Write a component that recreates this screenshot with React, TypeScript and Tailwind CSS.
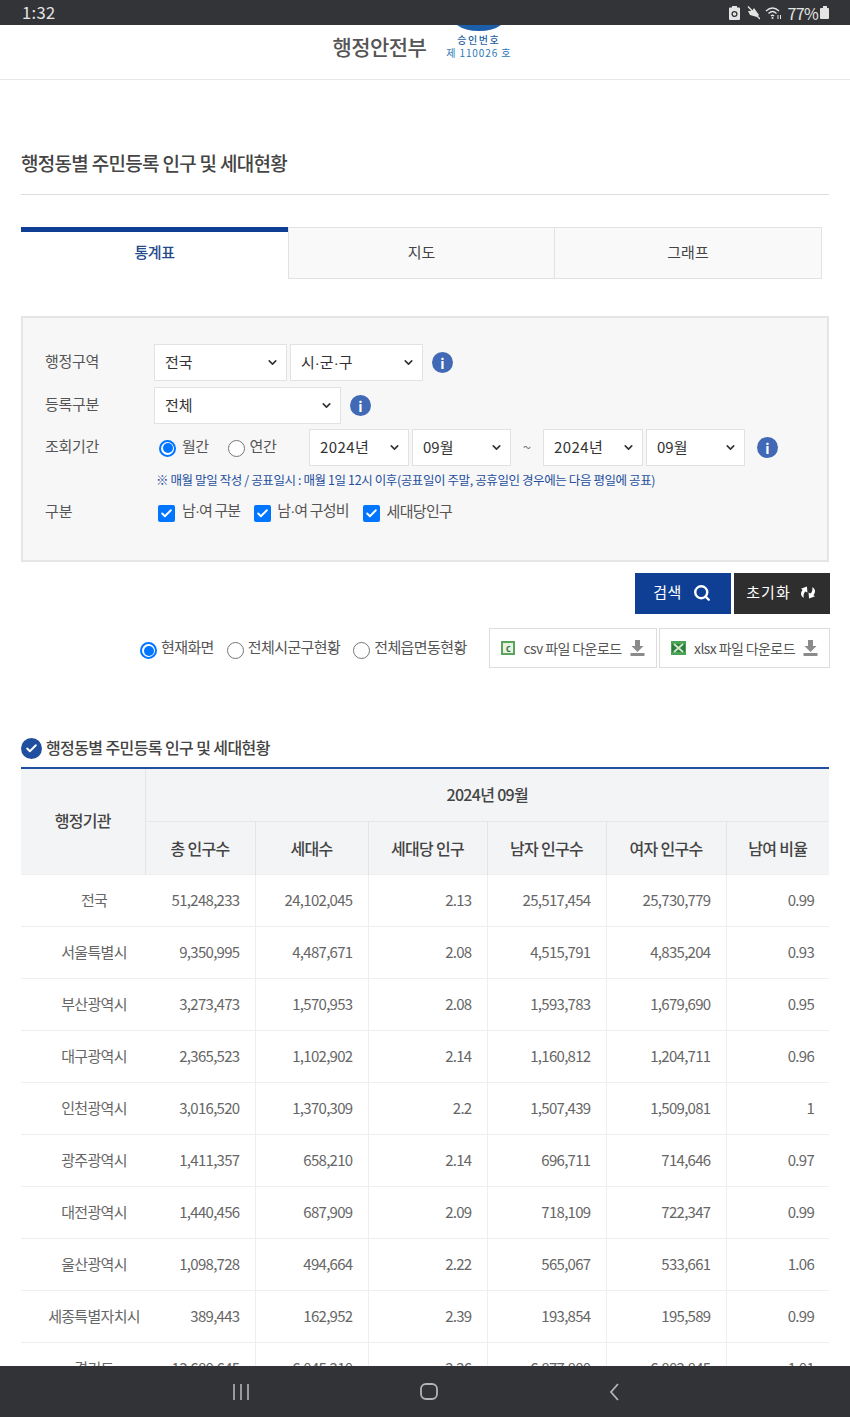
import { Search, Check, ChevronDown } from "lucide-react";
import type { ReactNode } from "react";

const rows = [
  ["전국", "51,248,233", "24,102,045", "2.13", "25,517,454", "25,730,779", "0.99"],
  ["서울특별시", "9,350,995", "4,487,671", "2.08", "4,515,791", "4,835,204", "0.93"],
  ["부산광역시", "3,273,473", "1,570,953", "2.08", "1,593,783", "1,679,690", "0.95"],
  ["대구광역시", "2,365,523", "1,102,902", "2.14", "1,160,812", "1,204,711", "0.96"],
  ["인천광역시", "3,016,520", "1,370,309", "2.2", "1,507,439", "1,509,081", "1"],
  ["광주광역시", "1,411,357", "658,210", "2.14", "696,711", "714,646", "0.97"],
  ["대전광역시", "1,440,456", "687,909", "2.09", "718,109", "722,347", "0.99"],
  ["울산광역시", "1,098,728", "494,664", "2.22", "565,067", "533,661", "1.06"],
  ["세종특별자치시", "389,443", "162,952", "2.39", "193,854", "195,589", "0.99"],
  ["경기도", "13,680,645", "6,045,210", "2.26", "6,877,800", "6,802,845", "1.01"],
];

const heads = ["총 인구수", "세대수", "세대당 인구", "남자 인구수", "여자 인구수", "남여 비율"];

function Dot() {
  return <span className="font-['Liberation_Sans']">·</span>;
}

function Select({ label, w }: { label: ReactNode; w: string }) {
  return (
    <div className={`flex h-[37px] items-center justify-between border border-[#e2e2e2] bg-white pl-[10px] pr-[7px] text-[15px] text-[#333] ${w}`}>
      <span>{label}</span>
      <ChevronDown size={13} strokeWidth={3} className="text-[#333]" />
    </div>
  );
}

function InfoDot() {
  return (
    <span className="flex h-[21px] w-[21px] items-center justify-center rounded-full bg-[#4169b5] text-[14px] font-bold leading-none text-white">
      i
    </span>
  );
}

function Radio({ on }: { on?: boolean }) {
  return on ? (
    <span className="flex h-[17px] w-[17px] shrink-0 items-center justify-center rounded-full border-2 border-[#0075ff] bg-white">
      <span className="h-[10px] w-[10px] rounded-full bg-[#0075ff]" />
    </span>
  ) : (
    <span className="block h-[17px] w-[17px] shrink-0 rounded-full border border-[#767676] bg-white" />
  );
}

function Box() {
  return (
    <span className="flex h-[17px] w-[17px] shrink-0 items-center justify-center rounded-[2px] bg-[#0075ff]">
      <Check size={13} strokeWidth={3.5} className="text-white" />
    </span>
  );
}

function ExcelIcon({ kind }: { kind: "csv" | "xlsx" }) {
  return kind === "csv" ? (
    <span className="flex h-[14px] w-[14px] items-center justify-center border-2 border-[#5ba55b] bg-[#e7f2e3] text-[9px] font-bold leading-none text-[#2e6f35]">
      c
    </span>
  ) : (
    <svg width="15" height="14" viewBox="0 0 15 14">
      <rect width="15" height="14" fill="#4aa354" />
      <rect x="1" y="3" width="13" height="8" fill="#2f7f3c" />
      <path d="M3 3 L12 11 M12 3 L3 11" stroke="#cfe6cc" strokeWidth="1.8" />
    </svg>
  );
}

function SaveIcon() {
  return (
    <svg width="15" height="16" viewBox="0 0 15 16" fill="#8b8b8b">
      <path d="M5 0 H10 V6 H13.5 L7.5 12 L1.5 6 H5 Z" />
      <rect x="0.5" y="13" width="14" height="3" />
    </svg>
  );
}

function FileButton({ kind, w }: { kind: "csv" | "xlsx"; w: string }) {
  return (
    <div className={`flex h-[40px] items-center justify-between border border-[#ddd] bg-white px-[11px] text-[14px] tracking-[-0.6px] text-[#555] ${w}`}>
      <ExcelIcon kind={kind} />
      <span>{kind} 파일 다운로드</span>
      <SaveIcon />
    </div>
  );
}

export default function App() {
  return (
    <div className="flex h-[1417px] w-[850px] flex-col overflow-hidden bg-white font-['Noto_Sans_CJK_KR','Noto_Sans',sans-serif]">
      <div className="flex h-[25px] shrink-0 items-center justify-between bg-[#333438] pl-[22px] pr-[21px] text-[#e4e4e4]">
        <span className="text-[16.5px] tracking-[0.4px]">1:32</span>
        <div className="flex items-center text-[16px]">
          <svg width="11" height="14" viewBox="0 0 11 14" fill="#e4e4e4" className="mr-[7px]">
            <path d="M3 0 H8 V1.5 H10 Q11 1.5 11 2.5 V13 Q11 14 10 14 H1 Q0 14 0 13 V2.5 Q0 1.5 1 1.5 H3 Z" />
            <circle cx="5.5" cy="8" r="2.4" fill="none" stroke="#333438" strokeWidth="1.3" />
          </svg>
          <svg width="13" height="14" viewBox="0 0 13 14" fill="#e4e4e4" className="mr-[5px]">
            <path d="M1 5 L5 5 L7 2 L12 9 L10 11 L3 9 Z" />
            <path d="M1 0.5 L13 13" stroke="#e4e4e4" strokeWidth="1.4" />
          </svg>
          <svg width="17" height="14" viewBox="0 0 17 14" fill="none" stroke="#e4e4e4" strokeWidth="1.3" className="mr-[6px]">
            <path d="M1 5 Q7.5 -1 14 5" />
            <path d="M3.5 7.5 Q7.5 3.5 11.5 7.5" />
            <path d="M6 10 Q7.5 8.5 9 10" />
            <circle cx="7.5" cy="12" r="1" fill="#e4e4e4" stroke="none" />
            <path d="M13 9 V13 M15.5 9 V13" strokeWidth="1" />
          </svg>
          <span className="tracking-[-0.7px]">77%</span>
          <span className="ml-[2px] flex flex-col items-center">
            <span className="h-[2px] w-[4px] bg-[#e4e4e4]" />
            <span className="h-[11px] w-[9px] rounded-[1px] bg-[#e4e4e4]" />
          </span>
        </div>
      </div>

      <div className="min-h-0 flex-1 overflow-hidden">
        <header className="flex h-[55px] justify-center border-b border-[#e6e6e6] pr-[6px]">
          <span className="mt-[6px] text-[21px] font-medium tracking-[-0.6px] text-[#555]">행정안전부</span>
          <div className="ml-[20px] flex flex-col items-center">
            <svg width="44" height="6" viewBox="0 0 44 6" className="block">
              <path d="M0 0 H44 Q36 6 22 6 Q8 6 0 0 Z" fill="#1c5ea8" />
            </svg>
            <span className="mt-[2px] text-[10px] font-medium leading-[13px] tracking-[1.6px] text-[#1d5f9f]">승인번호</span>
            <span className="text-[10px] leading-[13px] tracking-[0.9px] text-[#2a78b8]">제 110026 호</span>
          </div>
        </header>

        <div className="px-[21px]">
          <h1 className="mt-[68px] border-b border-[#ddd] pb-[17px] text-[19px] font-medium leading-[29px] tracking-[-0.7px] text-[#444]">
            행정동별 주민등록 인구 및 세대현황
          </h1>

          <div className="mt-[32px] flex h-[52px] w-[801px] text-[15px] text-[#444]">
            <div className="flex w-[267px] items-center justify-center border-t-[5px] border-[#0f3f94] bg-white pb-[7px] font-medium tracking-[-0.5px] text-[#254a8c]">
              통계표
            </div>
            <div className="flex w-[267px] items-center justify-center border border-[#e2e2e2] bg-[#f9f9f9] pb-[2px]">지도</div>
            <div className="flex w-[267px] items-center justify-center border border-l-0 border-[#e2e2e2] bg-[#f9f9f9] pb-[2px]">그래프</div>
          </div>

          <section className="mt-[37px] h-[246px] w-[808px] border-2 border-[#e5e5e5] bg-[#f7f7f7] pl-[22px] pt-[26px] text-[15px] text-[#555]">
            <div className="flex h-[37px] items-center">
              <span className="w-[109px] pb-[3px] tracking-[-0.3px]">행정구역</span>
              <Select label="전국" w="w-[133px]" />
              <div className="w-[3px]" />
              <Select label={<>시<Dot />군<Dot />구</>} w="w-[133px]" />
              <div className="ml-[9px]"><InfoDot /></div>
            </div>
            <div className="mt-[6px] flex h-[37px] items-center">
              <span className="w-[109px] pb-[3px] tracking-[-0.3px]">등록구분</span>
              <Select label="전체" w="w-[187px]" />
              <div className="ml-[9px]"><InfoDot /></div>
            </div>
            <div className="mt-[5px] flex h-[37px] items-center">
              <span className="w-[109px] pb-[3px] tracking-[-0.3px]">조회기간</span>
              <div className="flex w-[155px] items-center pl-[5px] pt-[1px]">
                <Radio on />
                <span className="ml-[6px] pb-[4px] tracking-[-0.5px]">월간</span>
                <div className="ml-[19px]"><Radio /></div>
                <span className="ml-[5px] pb-[4px] tracking-[-0.3px]">연간</span>
              </div>
              <Select label="2024년" w="w-[100px] tracking-[0.4px]" />
              <div className="w-[3px]" />
              <Select label="09월" w="w-[99px]" />
              <span className="w-[32px] text-center text-[#777]">~</span>
              <Select label="2024년" w="w-[100px] tracking-[0.4px]" />
              <div className="w-[3px]" />
              <Select label="09월" w="w-[99px]" />
              <div className="ml-[12px]"><InfoDot /></div>
            </div>
            <p className="mt-[4px] pl-[111px] text-[12.5px] leading-[20px] tracking-[-0.4px] text-[#1f4f9e]">
              ※ 매월 말일 작성 / 공표일시 : 매월 1일 12시 이후(공표일이 주말, 공휴일인 경우에는 다음 평일에 공표)
            </p>
            <div className="mt-[10px] flex h-[26px] items-center">
              <span className="w-[113px] pb-[4px]">구분</span>
              <Box />
              <span className="ml-[7px] pb-[4px] tracking-[-0.9px]">남<Dot />여 구분</span>
              <div className="ml-[14px]"><Box /></div>
              <span className="ml-[6px] pb-[4px] tracking-[-0.85px]">남<Dot />여 구성비</span>
              <div className="ml-[14px]"><Box /></div>
              <span className="ml-[7px] pb-[4px] tracking-[-0.7px]">세대당인구</span>
            </div>
          </section>

          <div className="mt-[11px] flex w-[809px] justify-end gap-[3px] text-[15px] text-white">
            <div className="flex h-[41px] w-[96px] items-center justify-center gap-[11px] bg-[#0f3f94] pb-[2px] pr-[2px]">
              <span className="tracking-[0.4px]">검색</span>
              <Search size={18} strokeWidth={3.2} />
            </div>
            <div className="flex h-[41px] w-[96px] items-center justify-center gap-[7px] bg-[#2e2e2e] pb-[2px]">
              <span className="tracking-[1px]">초기화</span>
              <svg width="20" height="13" viewBox="0 0 17 12" fill="#fff">
                <path d="M7.5 0.5 L8 6 L6 5 Q4 7 4.5 11 Q0 8 3.5 3.5 L2 2.5 Z" />
                <path d="M9.5 11.5 L9 6 L11 7 Q13 5 12.5 1 Q17 4 13.5 8.5 L15 9.5 Z" />
              </svg>
            </div>
          </div>

          <div className="mt-[14px] flex h-[40px] w-[809px] items-center text-[15px] tracking-[-0.6px] text-[#555]">
            <div className="ml-[119px] pt-[5px]"><Radio on /></div>
            <span className="ml-[4px] pb-[2px]">현재화면</span>
            <div className="ml-[13px] pt-[5px]"><Radio /></div>
            <span className="ml-[4px] pb-[2px]">전체시군구현황</span>
            <div className="ml-[13px] pt-[5px]"><Radio /></div>
            <span className="ml-[4px] pb-[2px]">전체읍면동현황</span>
            <div className="ml-auto flex gap-[2px]">
              <FileButton kind="csv" w="w-[168px]" />
              <FileButton kind="xlsx" w="w-[171px]" />
            </div>
          </div>

          <div className="mt-[68px] flex h-[24px] items-center gap-[4px]">
            <span className="flex h-[21px] w-[21px] items-center justify-center rounded-full bg-[#1f4f9e]">
              <Check size={13} strokeWidth={3.5} className="text-white" />
            </span>
            <span className="pb-[2px] text-[16px] font-medium tracking-[-0.6px] text-[#444]">행정동별 주민등록 인구 및 세대현황</span>
          </div>

          <table className="mt-[7px] w-[808px] table-fixed border-t-2 border-[#1f4f9e] text-[15px] tracking-[-0.7px] text-[#666]">
            <colgroup>
              <col className="w-[124px]" />
              <col className="w-[110px]" />
              <col className="w-[113px]" />
              <col className="w-[119px]" />
              <col className="w-[119px]" />
              <col className="w-[120px]" />
              <col className="w-[103px]" />
            </colgroup>
            <thead className="bg-[#f3f4f6] text-[16px] text-[#444]">
              <tr className="h-[53px] border-b border-[#e8e8e8]">
                <th rowSpan={2} className="border-r border-[#e4e4e4] pb-[2px] font-medium">행정기관</th>
                <th colSpan={6} className="pb-[2px] font-medium">2024년 09월</th>
              </tr>
              <tr className="h-[53px]">
                {heads.map((h, i) => (
                  <th key={h} className={`font-medium ${i < 5 ? "border-r border-[#e4e4e4]" : ""}`}>{h}</th>
                ))}
              </tr>
            </thead>
            <tbody>
              {rows.map((r) => (
                <tr key={r[0]} className="h-[52px] border-t border-[#eeeeee]">
                  <td className="pl-[22px] text-center">{r[0]}</td>
                  {r.slice(1).map((v, i) => (
                    <td key={i} className={`pr-[15px] text-right ${i === 0 ? "" : "border-l border-[#eeeeee]"}`}>{v}</td>
                  ))}
                </tr>
              ))}
            </tbody>
          </table>
        </div>
      </div>

      <nav className="flex h-[51px] shrink-0 items-center justify-center gap-[170px] bg-[#323337] pl-[2px] text-[#b4b4b4]">
        <svg width="18" height="16" viewBox="0 0 18 16" fill="none" stroke="currentColor" strokeWidth="1.6">
          <path d="M2 0 V16 M9 0 V16 M16 0 V16" />
        </svg>
        <svg width="18" height="17" viewBox="0 0 18 17" fill="none" stroke="currentColor" strokeWidth="1.8">
          <rect x="1" y="1" width="16" height="15" rx="5" />
        </svg>
        <svg width="12" height="18" viewBox="0 0 12 18" fill="none" stroke="currentColor" strokeWidth="1.8">
          <path d="M10 1 L3 9 L10 17" />
        </svg>
      </nav>
    </div>
  );
}
